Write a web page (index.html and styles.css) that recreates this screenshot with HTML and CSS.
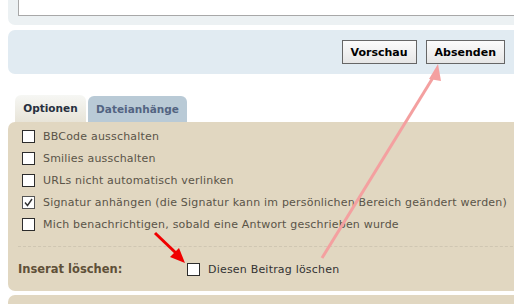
FILE: index.html
```html
<!DOCTYPE html>
<html lang="de">
<head>
    <meta charset="UTF-8">
    <meta name="viewport" content="width=device-width, initial-scale=1.0">
    <title>Beitrag schreiben</title>
    <link rel="stylesheet" href="styles.css">
</head>
<body>

    <div class="page">
        <div class="panel message-panel">
            <div class="message-box"></div>
        </div>

        <div class="panel submit-panel">
            <button class="btn">Vorschau</button>
            <button class="btn">Absenden</button>
        </div>

        <div class="tabs">
            <span class="tab active">Optionen</span>
            <span class="tab files">Dateianhänge</span>
        </div>

        <div class="options-panel">
            <div class="option"><span class="box"></span>BBCode ausschalten</div>
            <div class="option"><span class="box"></span>Smilies ausschalten</div>
            <div class="option"><span class="box"></span>URLs nicht automatisch verlinken</div>
            <div class="option">
                <span class="box checked">
                    <svg width="11" height="11" viewBox="0 0 11 11"><path d="M2 5.5 L4.5 8.5 L9 2" fill="none" stroke="#333" stroke-width="1.4"/></svg>
                </span>Signatur anhängen (die Signatur kann im persönlichen Bereich geändert werden)
            </div>
            <div class="option"><span class="box"></span>Mich benachrichtigen, sobald eine Antwort geschrieben wurde</div>

            <div class="delete-row">
                <span class="delete-label">Inserat löschen:</span>
                <span class="option delete-option"><span class="box"></span>Diesen Beitrag löschen</span>
            </div>
        </div>

        <div class="options-panel next-panel"></div>
    </div>

    <svg class="overlay" width="514" height="304" viewBox="0 0 514 304">
        <line x1="322" y1="258" x2="434" y2="76" stroke="#f4a0a0" stroke-width="3" />
        <polygon points="438,64 429,79 441,81" fill="#f4a0a0" />
        <line x1="155" y1="233" x2="177" y2="254" stroke="#f00000" stroke-width="3" />
        <polygon points="185,263 170,257 179,248" fill="#f00000" />
    </svg>

</body>
</html>
```

FILE: styles.css
```css
body {
    margin: 0;
    font-family: "DejaVu Sans", Verdana, sans-serif;
    font-size: 11px;
    background-color: #ffffff;
    overflow: hidden;
    position: relative;
}
.page {
    width: 530px;
    padding-left: 8px;
}
.panel {
    border-radius: 0 0 0 7px;
}
.message-panel {
    background-color: #ecf1f3;
    height: 25px;
    padding-left: 10px;
    box-sizing: border-box;
}
.message-box {
    height: 15px;
    background: #ffffff;
    border: 1px solid #a8a8a8;
    border-top: none;
}
.submit-panel {
    margin-top: 5px;
    height: 44px;
    background-color: #e1ebf2;
    border-radius: 7px;
    display: flex;
    justify-content: flex-end;
    align-items: center;
    gap: 9px;
    padding-right: 33px;
    box-sizing: border-box;
}
.btn {
    font-family: "DejaVu Sans", Verdana, sans-serif;
    font-size: 11px;
    font-weight: bold;
    color: #000000;
    height: 24px;
    padding: 0 8px;
    border: 1px solid #666666;
    background: linear-gradient(#fbfbfb, #e6e6e6);
}
.tabs {
    margin-top: 21px;
    padding-left: 7px;
    display: flex;
    align-items: flex-end;
    gap: 2px;
    height: 27px;
}
.tab {
    font-weight: bold;
    font-size: 10.5px;
    color: #536482;
    background-color: #b9cad6;
    border-radius: 6px 6px 0 0;
    height: 26px;
    line-height: 26px;
    width: 99px;
    text-align: center;
}
.tab.active {
    color: #28313f;
    background: linear-gradient(#f6f7f4, #e8e4d8);
    height: 27px;
    line-height: 27px;
    width: 71px;
}
.options-panel {
    background-color: #e1d7c1;
    border-radius: 7px;
    padding: 3px 0 0 14px;
    height: 169px;
    box-sizing: border-box;
}
.option {
    display: flex;
    align-items: center;
    height: 22px;
    color: #5a5448;
    letter-spacing: 0.2px;
}
.box {
    width: 11px;
    height: 11px;
    border: 1px solid #2c2c2c;
    background: #ffffff;
    margin-right: 8px;
    display: inline-flex;
}
.box.checked {
    border-color: #555555;
}
.delete-row {
    margin-top: 11px;
    border-top: 1px dashed #cfc6b2;
    margin-left: -4px;
    padding: 11px 0 0 0;
    display: flex;
    align-items: center;
}
.delete-label {
    width: 169px;
    font-weight: bold;
    color: #5f5038;
    font-size: 11.5px;
}
.delete-option {
    color: #333333;
}
.next-panel {
    margin-top: 4px;
    height: 20px;
}
.overlay {
    position: absolute;
    left: 0;
    top: 0;
}
```
